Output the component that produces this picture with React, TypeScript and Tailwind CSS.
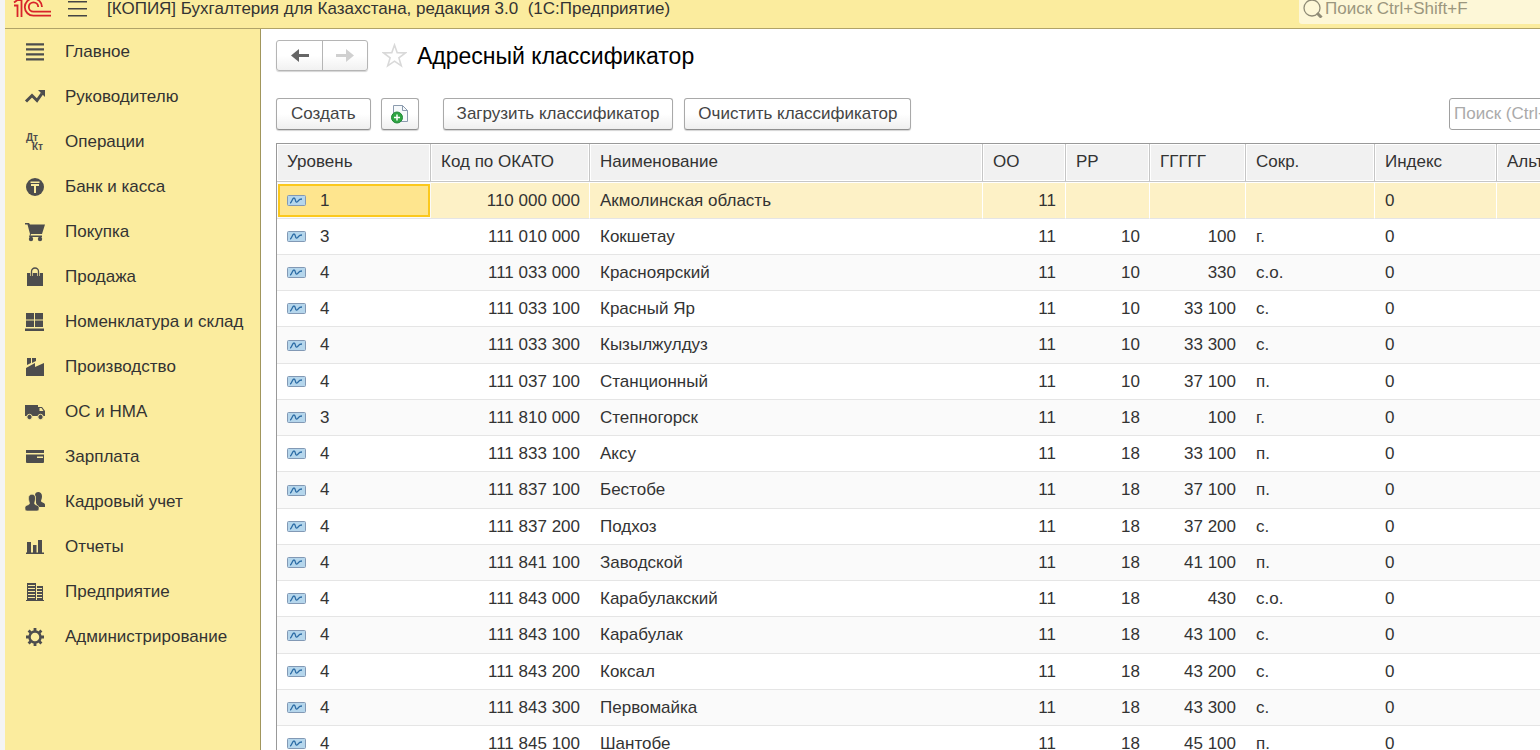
import { ReactNode, useState } from "react";
import clsx from "clsx";

interface MenuItem {
  title: string;
  icon: ReactNode;
}

interface Address {
  level: number;
  code: string;
  name: string;
  oo: string;
  rr: string;
  ggggg: string;
  short: string;
}

const menu: MenuItem[] = [
  {
    title: "Главное",
    icon: <path d="M1 1.200h18v2.400H1zM1 6.200h18v2.400H1zM1 11.200h18v2.400H1zM1 16.200h18v2.400H1z" />,
  },
  {
    title: "Руководителю",
    icon: (
      <>
        <path
          d="M1 14.500l6-6 5 5 5-7"
          fill="none"
          stroke="currentColor"
          strokeWidth="3"
        />
        <path d="M13 3h7v7z" />
      </>
    ),
  },
  {
    title: "Операции",
    icon: (
      <g fontFamily="Liberation Sans" fontWeight="bold" fontSize="10">
        <text x="1" y="9">
          Дт
        </text>
        <text x="7" y="18">
          Кт
        </text>
      </g>
    ),
  },
  {
    title: "Банк и касса",
    icon: (
      <>
        <circle cx="10" cy="10" r="9" />
        <path d="M5.500 4.500h9V6h-9zM6 7h8v2h-3v7H9V9H6z" fill="#fbec9e" />
      </>
    ),
  },
  {
    title: "Покупка",
    icon: (
      <>
        <path d="M0 1h4l1 1.500h15L17 12H6l-.5 1.500H17V15H4l1-3L2.500 2.500H0z" />
        <circle cx="6" cy="17" r="2.200" />
        <circle cx="15" cy="17" r="2.200" />
      </>
    ),
  },
  {
    title: "Продажа",
    icon: (
      <>
        <path d="M2 6h16v13H2z" />
        <path
          d="M6.500 9V4.500a3.500 3.500 0 0 1 7 0V9"
          fill="none"
          stroke="#fbec9e"
          strokeWidth="2.600"
        />
        <path
          d="M6.500 9V4.500a3.500 3.500 0 0 1 7 0V9"
          fill="none"
          stroke="currentColor"
          strokeWidth="1.300"
        />
      </>
    ),
  },
  {
    title: "Номенклатура и склад",
    icon: (
      <path d="M1 1h8v6.500H1zM10 1h8v6.500h-8zM1 8.500h8V15H1zM10 8.500h8V15h-8zM0 16.500h19V19H0z" />
    ),
  },
  {
    title: "Производство",
    icon: (
      <path d="M2 1h4v5l-4 2zM7 1h4v3L7 6zM1 11l9-5v4l9-4v13H1z" />
    ),
  },
  {
    title: "ОС и НМА",
    icon: (
      <>
        <path d="M0 3h13v11H0zM13 5h4l3 4v5h-7z" />
        <path d="M14.500 6h2l2 3h-4z" fill="#fbec9e" />
        <g stroke="#fbec9e">
          <circle cx="4.500" cy="15" r="2.700" />
          <circle cx="15.500" cy="15" r="2.700" />
        </g>
      </>
    ),
  },
  {
    title: "Зарплата",
    icon: (
      <>
        <path d="M1 3h18v3H1zM1 7.500h18V15a1 1 0 0 1-1 1H2a1 1 0 0 1-1-1z" />
        <path d="M12 9.500h6V11h-6z" fill="#fbec9e" />
      </>
    ),
  },
  {
    title: "Кадровый учет",
    icon: (
      <>
        <path d="M10 3c0-4 7-4 7 1 0 3-1 4-1 5 0 2 4 1 4 4v2h-7l-2-4V5z" />
        <path
          d="M3.500 6c0-5 7-5 7 0 0 3-1 4-1 5.500 0 2 4.500 1 4.500 4V17c0 1-1 2-2 2H2c-1 0-2-1-2-2v-1.500c0-3 4.500-2 4.500-4 0-1.500-1-2.500-1-5.500z"
          stroke="#fbec9e"
          strokeWidth="0.600"
        />
      </>
    ),
  },
  {
    title: "Отчеты",
    icon: <path d="M1 15.500h18V17H1zM2 5h4v11H2zM8 8h3.500v8H8zM13 3h4v13h-4z" />,
  },
  {
    title: "Предприятие",
    icon: (
      <>
        <path d="M2 1h9v17H2zM12 4h6v14h-6zM1 18h18v1H1z" />
        <path
          d="M3 3.500h7M3 6.500h7M3 9.500h7M3 12.500h7M3 15.500h7M12 6.500h5M12 9.500h5M12 12.500h5M12 15.500h5"
          stroke="#fbec9e"
        />
      </>
    ),
  },
  {
    title: "Администрирование",
    icon: (
      <>
        <circle
          cx="10"
          cy="10"
          r="5.500"
          fill="none"
          stroke="currentColor"
          strokeWidth="2.500"
        />
        <path
          d="M10 1v3M10 16v3M1 10h3M16 10h3M3.600 3.600l2.200 2.200M14.200 14.200l2.200 2.200M16.400 3.600l-2.200 2.200M5.800 14.200l-2.200 2.200"
          stroke="currentColor"
          strokeWidth="2.800"
        />
      </>
    ),
  },
];

const rows: Address[] = [
  { level: 1, code: "110 000 000", name: "Акмолинская область", oo: "11", rr: "", ggggg: "", short: "" },
  { level: 3, code: "111 010 000", name: "Кокшетау", oo: "11", rr: "10", ggggg: "100", short: "г." },
  { level: 4, code: "111 033 000", name: "Красноярский", oo: "11", rr: "10", ggggg: "330", short: "с.о." },
  { level: 4, code: "111 033 100", name: "Красный Яр", oo: "11", rr: "10", ggggg: "33 100", short: "с." },
  { level: 4, code: "111 033 300", name: "Кызылжулдуз", oo: "11", rr: "10", ggggg: "33 300", short: "с." },
  { level: 4, code: "111 037 100", name: "Станционный", oo: "11", rr: "10", ggggg: "37 100", short: "п." },
  { level: 3, code: "111 810 000", name: "Степногорск", oo: "11", rr: "18", ggggg: "100", short: "г." },
  { level: 4, code: "111 833 100", name: "Аксу", oo: "11", rr: "18", ggggg: "33 100", short: "п." },
  { level: 4, code: "111 837 100", name: "Бестобе", oo: "11", rr: "18", ggggg: "37 100", short: "п." },
  { level: 4, code: "111 837 200", name: "Подхоз", oo: "11", rr: "18", ggggg: "37 200", short: "с." },
  { level: 4, code: "111 841 100", name: "Заводской", oo: "11", rr: "18", ggggg: "41 100", short: "п." },
  { level: 4, code: "111 843 000", name: "Карабулакский", oo: "11", rr: "18", ggggg: "430", short: "с.о." },
  { level: 4, code: "111 843 100", name: "Карабулак", oo: "11", rr: "18", ggggg: "43 100", short: "с." },
  { level: 4, code: "111 843 200", name: "Коксал", oo: "11", rr: "18", ggggg: "43 200", short: "с." },
  { level: 4, code: "111 843 300", name: "Первомайка", oo: "11", rr: "18", ggggg: "43 300", short: "с." },
  { level: 4, code: "111 845 100", name: "Шантобе", oo: "11", rr: "18", ggggg: "45 100", short: "п." },
];

const columns = [
  { title: "Уровень", width: "w-[154px]" },
  { title: "Код по ОКАТО", width: "w-[159px]" },
  { title: "Наименование", width: "w-[393px]" },
  { title: "ОО", width: "w-[83px]" },
  { title: "РР", width: "w-[84px]" },
  { title: "ГГГГГ", width: "w-[96px]" },
  { title: "Сокр.", width: "w-[129px]" },
  { title: "Индекс", width: "w-[122px]" },
  { title: "Альт. название", width: "" },
];

const buttonStyle =
  "flex h-8 items-center justify-center rounded-[3px] border border-[#a9a9a9] border-b-[#8f8f8f] bg-linear-to-b from-white from-50% to-[#efefef] text-[#444] shadow-[0_1px_1px_#d4d4d4]";

const Logo = () => (
  <svg width="38" height="26" viewBox="0 0 38 26" fill="none" stroke="#d8232a" strokeWidth="1.800" aria-label="1С">
    <path d="M1 10.500h3.500V22M1 7.500L4.500 5h4v17" />
    <path d="M29 12a8.600 8.600 0 1 0-8.500 8.700H38" />
    <path d="M25.200 12a4.700 4.700 0 1 0-4.700 4.700H38" />
  </svg>
);

const RecordIcon = () => (
  <svg width="19" height="11" viewBox="0 0 19 11" className="shrink-0">
    <rect x="0.500" y="0.500" width="18" height="10" rx="1" fill="#b5d6ec" stroke="#8299b5" />
    <path d="M3 8c2 0 2-5 4-5s1 5 3 4 1-3 5-3" fill="none" stroke="#2c6ca5" strokeWidth="1.300" />
  </svg>
);

const Arrow = ({ flip }: { flip?: boolean }) => (
  <svg width="18" height="13" viewBox="0 0 18 13" fill="currentColor" className={clsx(flip && "rotate-180")}>
    <path d="M0 6.500L8 0v5h10v3H8v5z" />
  </svg>
);

const Header = () => (
  <header className="flex h-[29px] items-end overflow-hidden border-b border-[#b0a368] bg-[#fbec9e] pr-4 pb-1 pl-2">
    <div className="flex h-8 items-center">
      <Logo />
      <button type="button" aria-label="Меню" className="ml-[17px] text-[#444]">
        <svg width="19" height="17" viewBox="0 0 19 17" fill="currentColor">
          <path d="M0 1h19v1.500H0zM0 8h19v1.500H0zM0 15h19v1.500H0z" />
        </svg>
      </button>
      <span className="ml-5 pt-[2px] whitespace-pre">
        [КОПИЯ] Бухгалтерия для Казахстана, редакция 3.0  (1С:Предприятие)
      </span>
    </div>
    <label className="ml-auto flex h-8 w-[377px] items-center gap-[2px] rounded-[3px] bg-[#fdf7d7] pl-1 text-[#8f8b76]">
      <svg width="20" height="20" viewBox="0 0 20 20" fill="none" stroke="currentColor" className="shrink-0">
        <circle cx="9" cy="10" r="8" strokeWidth="1.300" />
        <path d="M14 15l4.500 4.500" strokeWidth="3" />
      </svg>
      <input
        type="text"
        aria-label="Поиск"
        placeholder="Поиск Ctrl+Shift+F"
        className="w-full bg-transparent pt-[2px] outline-none placeholder:text-[#9b967e]"
      />
    </label>
  </header>
);

const Sidebar = () => (
  <nav className="w-64 shrink-0 border-r border-[#a1965c] bg-[#fbec9e]">
    {menu.map((item) => (
      <a key={item.title} href="#" className="flex h-[45px] items-center gap-5 pl-5">
        <svg
          width="20"
          height="20"
          viewBox="0 0 20 20"
          fill="currentColor"
          className="shrink-0 overflow-visible text-[#4d4d4d]"
        >
          {item.icon}
        </svg>
        {item.title}
      </a>
    ))}
  </nav>
);

const Toolbar = () => (
  <div className="mt-[27px] flex items-center">
    <button type="button" className={clsx(buttonStyle, "px-[14px]")}>
      Создать
    </button>
    <button type="button" aria-label="Создать копированием" className={clsx(buttonStyle, "ml-[10px] w-[38px]")}>
      <svg width="18" height="20" viewBox="0 0 18 20" fill="none">
        <path d="M2.500 1.500h9l5 5v11h-14z" fill="#f6f9fb" stroke="#8b9bae" />
        <path d="M11.500 1.500v5h5" stroke="#8b9bae" />
        <circle cx="6" cy="13.500" r="5.500" fill="#2fa543" stroke="#23893a" />
        <path d="M6 10.500v6M3 13.500h6" stroke="#fff" strokeWidth="1.500" />
      </svg>
    </button>
    <button type="button" className={clsx(buttonStyle, "ml-6 px-[13px]")}>
      Загрузить классификатор
    </button>
    <button type="button" className={clsx(buttonStyle, "ml-[11px] px-[13px]")}>
      Очистить классификатор
    </button>
    <input
      type="text"
      aria-label="Поиск по списку"
      placeholder="Поиск (Ctrl+F)"
      className="ml-auto h-8 w-[228px] rounded-[3px] border border-[#a0a0a0] bg-white px-1 outline-none placeholder:text-[#aaa]"
    />
  </div>
);

const AddressTable = () => {
  const [selected, setSelected] = useState(0);

  return (
    <table className="mt-[13px] w-full table-fixed border-separate border-spacing-0 border-t border-l border-[#999]">
      <thead>
        <tr className="h-[38px]">
          {columns.map((column) => (
            <th
              key={column.title}
              className={clsx(
                "overflow-hidden border-r border-b border-[#c6c6c6] bg-[#f1f1f1] pb-[2px] pl-[10px] text-left font-normal whitespace-nowrap shadow-[inset_0_0_0_1px_white]",
                column.width
              )}
            >
              {column.title}
            </th>
          ))}
        </tr>
      </thead>
      <tbody>
        {rows.map((row, index) => {
          const active = index === selected;
          const cell = clsx(
            "border-b border-[#e5e5e5] pl-[10px]",
            active
              ? "border-r border-r-white bg-[#fdf1c6] pt-px pr-[9px] shadow-[inset_0_1px_0_white]"
              : "pr-[10px]"
          );

          return (
            <tr
              key={row.code}
              onClick={() => setSelected(index)}
              className="h-9 odd:bg-[#fafafa] nth-[4n+1]:h-[37px]"
            >
              <td className={clsx("border-b border-[#e5e5e5]", active ? "px-px pt-[2px] pb-px" : "px-[10px]")}>
                <div
                  className={clsx(
                    "flex items-center gap-[14px]",
                    active && "h-[33px] border-2 border-[#fbc81d] bg-[#fee58e] px-[7px]"
                  )}
                >
                  <RecordIcon />
                  {row.level}
                </div>
              </td>
              <td className={clsx(cell, "text-right")}>{row.code}</td>
              <td className={cell}>{row.name}</td>
              <td className={clsx(cell, "text-right")}>{row.oo}</td>
              <td className={clsx(cell, "text-right")}>{row.rr}</td>
              <td className={clsx(cell, "text-right")}>{row.ggggg}</td>
              <td className={cell}>{row.short}</td>
              <td className={cell}>0</td>
              <td className={cell}></td>
            </tr>
          );
        })}
      </tbody>
    </table>
  );
};

const App = () => {
  return (
    <div className="h-screen overflow-hidden bg-white font-['Liberation_Sans',Arial,sans-serif] text-[17px] leading-6 text-[#333]">
      <div className="flex h-full min-w-[1692px] flex-col border-l-5 border-[#f4f4f4]">
        <Header />
        <div className="flex min-h-0 flex-1">
          <Sidebar />
          <main className="min-w-0 flex-1 overflow-hidden px-[15px] pt-[11px]">
            <div className="flex items-center">
              <div className="flex h-[31px] rounded-[3px] border border-[#b5b5b5] bg-linear-to-b from-white from-50% to-[#f1f1f1] shadow-[0_1px_1px_#d4d4d4]">
                <button
                  type="button"
                  aria-label="Назад"
                  className="flex w-[46px] items-center justify-center border-r border-[#b5b5b5] text-[#666]"
                >
                  <Arrow />
                </button>
                <button
                  type="button"
                  aria-label="Вперед"
                  className="flex w-11 items-center justify-center text-[#d0d0d0]"
                >
                  <Arrow flip />
                </button>
              </div>
              <button type="button" aria-label="В избранное" className="ml-[14px]">
                <svg width="25" height="25" viewBox="0 0 25 25" fill="none" stroke="#d9d9d9" strokeWidth="1.600">
                  <path d="M12.500 2l2.700 7.800 8.300.1-6.600 5 2.400 8-6.800-4.700-6.800 4.700 2.400-8-6.600-5 8.300-.1z" />
                </svg>
              </button>
              <h1 className="ml-[10px] text-[23px] leading-7 text-black">Адресный классификатор</h1>
            </div>
            <Toolbar />
            <AddressTable />
          </main>
        </div>
      </div>
    </div>
  );
};

export default App;
